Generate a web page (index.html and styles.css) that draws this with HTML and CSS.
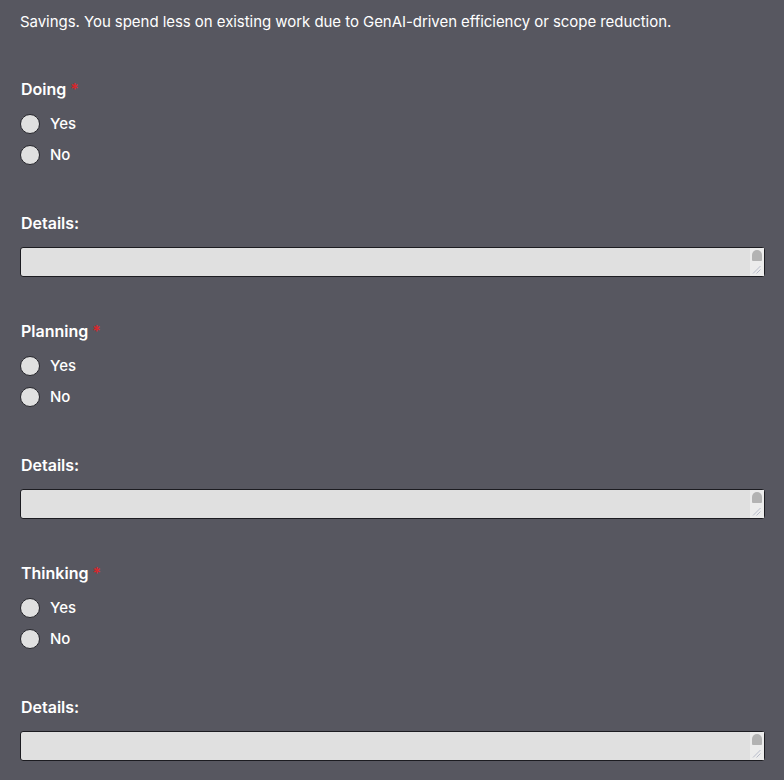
FILE: index.html
```html
<!DOCTYPE html>
<html>
<head>
<meta charset="utf-8">
<link rel="stylesheet" href="styles.css">
</head>
<body>
<p class="intro">Savings. You spend less on existing work due to GenAI-driven efficiency or scope reduction.</p>

<div class="section">
  <div class="label">Doing <span class="req">*</span></div>
  <div class="opts">
    <div class="opt"><span class="radio"></span><span>Yes</span></div>
    <div class="opt"><span class="radio"></span><span>No</span></div>
  </div>
  <div class="label details">Details:</div>
  <div class="ta"><span class="sb"><span class="thumb"></span><svg class="grip" width="10" height="9" viewBox="0 0 10 9"><path d="M1 8.5 L8.5 1 M4.5 8.5 L8.5 4.5" stroke="#b8bccb" stroke-width="1"/></svg></span></div>
</div>

<div class="section">
  <div class="label">Planning <span class="req">*</span></div>
  <div class="opts">
    <div class="opt"><span class="radio"></span><span>Yes</span></div>
    <div class="opt"><span class="radio"></span><span>No</span></div>
  </div>
  <div class="label details">Details:</div>
  <div class="ta"><span class="sb"><span class="thumb"></span><svg class="grip" width="10" height="9" viewBox="0 0 10 9"><path d="M1 8.5 L8.5 1 M4.5 8.5 L8.5 4.5" stroke="#b8bccb" stroke-width="1"/></svg></span></div>
</div>

<div class="section">
  <div class="label">Thinking <span class="req">*</span></div>
  <div class="opts">
    <div class="opt"><span class="radio"></span><span>Yes</span></div>
    <div class="opt"><span class="radio"></span><span>No</span></div>
  </div>
  <div class="label details">Details:</div>
  <div class="ta"><span class="sb"><span class="thumb"></span><svg class="grip" width="10" height="9" viewBox="0 0 10 9"><path d="M1 8.5 L8.5 1 M4.5 8.5 L8.5 4.5" stroke="#b8bccb" stroke-width="1"/></svg></span></div>
</div>
</body>
</html>
```
FILE: styles.css
```css
html, body {
  margin: 0;
  padding: 0;
  background: #575760;
}
body {
  padding: 11px 19px 0 20px;
  font-family: Inter, "Noto Sans", sans-serif;
  color: #ffffff;
  overflow: hidden;
  height: 780px;
  box-sizing: border-box;
}
.intro {
  margin: 0 0 44px 0;
  font-size: 15px;
  line-height: 22px;
  font-weight: 400;
  letter-spacing: -0.05px;
}
.section {
  margin-bottom: 42px;
}
.label {
  font-size: 16px;
  line-height: 24px;
  font-weight: 600;
  padding-left: 1px;
}
.req {
  color: #d9262b;
  font-weight: 600;
}
.opts {
  margin-top: 7px;
  margin-bottom: 41px;
}
.opt {
  display: flex;
  align-items: center;
  gap: 10px;
  height: 31px;
  font-size: 15px;
  font-weight: 500;
}
.radio {
  width: 18px;
  height: 18px;
  border-radius: 50%;
  background: #e0e0e0;
  border: 1px solid #25252b;
}
.details {
  margin-bottom: 12px;
}
.ta {
  position: relative;
  height: 28px;
  background: #e0e0e0;
  border: 1px solid #1c1c21;
  border-radius: 3px;
}
.sb {
  position: absolute;
  top: 0;
  right: 0;
  width: 14px;
  height: 28px;
  background: #ececec;
}
.thumb {
  position: absolute;
  top: 2px;
  left: 2px;
  width: 10px;
  height: 11px;
  background: #b3b3b3;
  border-radius: 5px 5px 1px 1px;
}
.grip {
  position: absolute;
  left: 2px;
  bottom: 2px;
}
```
